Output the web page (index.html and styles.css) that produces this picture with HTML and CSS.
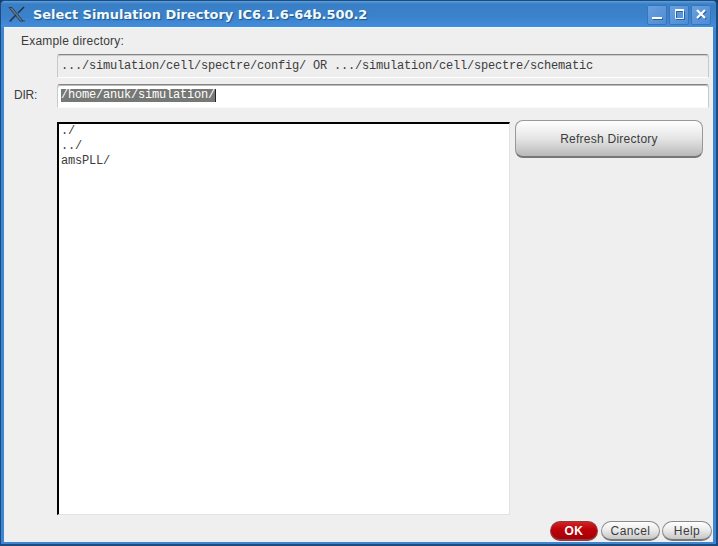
FILE: index.html
```html
<!DOCTYPE html>
<html lang="en">
<head>
<meta charset="utf-8">
<title>Select Simulation Directory</title>
<link rel="stylesheet" href="styles.css">
</head>
<body>
<div class="window">
  <header class="titlebar">
    <svg class="app-icon" width="18" height="18" viewBox="0 0 18 18" fill="none">
      <path d="M1 2.500h3L15 16h-3z" fill="#667887" stroke="#26394c" stroke-width=".9"/>
      <path d="M16 2L10 8M8 10L2 16" stroke="#26313d" stroke-width="1.500"/>
      <path d="M1 16h3M14 16h3" stroke="#34485a"/>
    </svg>
    <h1 class="title">Select Simulation Directory IC6.1.6-64b.500.2</h1>
    <div class="controls">
      <button class="control" aria-label="Minimize"><svg width="20" height="20" viewBox="0 0 20 20"><path d="M6 14h10" stroke="#2860a5" stroke-width="2"/><path d="M5 13h10" stroke="#fff" stroke-width="2"/></svg></button>
      <button class="control" aria-label="Maximize"><svg width="20" height="20" viewBox="0 0 20 20" fill="none"><path d="M7.500 6.500h8v8h-8z" stroke="#2860a5"/><path d="M6.500 5.500h8v8h-8z" stroke="#e8f6ff"/><path d="M6 5h9" stroke="#fff" stroke-width="2"/></svg></button>
      <button class="control" aria-label="Close"><svg width="20" height="20" viewBox="0 0 20 20"><path d="M7 6l8 8m0-8l-8 8" stroke="#2860a5" stroke-width="2"/><path d="M6 5l8 8m0-8l-8 8" stroke="#fff" stroke-width="2.200"/></svg></button>
    </div>
  </header>
  <main class="content">
    <p class="example-label">Example directory:</p>
    <div class="field example">.../simulation/cell/spectre/config/ OR .../simulation/cell/spectre/schematic</div>
    <div class="dir-row">
      <span class="dir-label">DIR:</span>
      <div class="field dir"><span class="selection">/home/anuk/simulation/</span></div>
    </div>
    <div class="browser">
      <ul class="list"><li>./</li><li>../</li><li>amsPLL/</li></ul>
      <button class="refresh">Refresh Directory</button>
    </div>
    <footer class="actions">
      <button class="pill ok">OK</button>
      <button class="pill cancel">Cancel</button>
      <button class="pill help">Help</button>
    </footer>
  </main>
</div>
</body>
</html>
```
FILE: styles.css
```css
* { box-sizing: border-box; margin: 0; padding: 0; }
body { width: 718px; height: 546px; overflow: hidden; background: #173d68; font: 12px/16px "Liberation Sans", sans-serif; color: #3c3c3c; }
button { font: inherit; color: inherit; border: 0; }
.window { height: 546px; display: flex; flex-direction: column; background: #3e86d2; border: 1px solid #1c4b80; border-bottom-width: 2px; border-right-width: 2px; border-radius: 5px 5px 0 0; padding: 0 3px 2px; }
.titlebar { height: 26px; flex: none; display: flex; align-items: center; margin: 0 -3px; padding: 2px 5px 0 7px; background: linear-gradient(#5f9fdc 0, #397fc6 3px, #3b82cb 16px, #438ddd); border-radius: 4px 4px 0 0; }
.app-icon { flex: none; margin-top: -2px; }
.title { flex: 1; margin: 0 0 0 7px; font: bold 13px/20px "DejaVu Sans", sans-serif; letter-spacing: -.04px; color: #effaff; text-shadow: 1px 1px 1px #245489; white-space: nowrap; }
.controls { display: flex; gap: 2px; margin-top: -1px; }
.control { width: 20px; height: 20px; background: linear-gradient(135deg, #6ba1df, #4c8bd3); border-radius: 2px; box-shadow: inset 0 0 0 1px #3675ba; }
.control svg { display: block; }
.content { flex: 1; background: #efefef; border-top: 1px solid #e9fbff; padding: 5px 4px 0 10px; }
.example-label { height: 21px; padding-left: 7px; letter-spacing: .2px; }
.field { height: 24px; border: 1px solid #c9c9c9; border-top: 1px solid #858585; border-bottom-color: #fff; border-radius: 3px 3px 0 0; padding: 3px 3px; font: 12px/16px "Liberation Mono", monospace; letter-spacing: -.2px; white-space: pre; }
.example { margin-left: 43px; background: #eee; box-shadow: inset 0 1px #ccc; }
.dir-row { display: flex; margin-top: 6px; }
.dir-label { width: 43px; padding-top: 3px; letter-spacing: -.2px; }
.dir { flex: 1; padding-top: 4px; background: #fff; box-shadow: inset 0 1px #bbb; border-bottom-color: #fafafa; }
.selection { display: block; width: 155px; height: 13px; line-height: 13px; background: #757875; color: #fff; border-right: 1px solid #222; }
.browser { display: flex; align-items: flex-start; margin: 14px 0 0 43px; }
.list { width: 453px; height: 393px; list-style: none; background: #fff; border: 2px solid #000; border-right: 1px solid #e2e2e2; border-bottom: 1px solid #e2e2e2; padding: 0 2px; font: 12px/15px "Liberation Mono", monospace; letter-spacing: -.2px; }
.refresh { width: 188px; height: 38px; margin: -2px 0 0 5px; letter-spacing: .25px; border: 1px solid #999; border-bottom: 2px solid #777; border-radius: 8px; background: linear-gradient(#fff, #e5e5e5 50%, #b9b9b9); }
.actions { display: flex; justify-content: flex-end; gap: 2px; margin: 6px -3px 0 0; }
.pill { height: 20px; border: 1px solid #8a8a8a; border-bottom: 2px solid #777; border-radius: 10px; background: linear-gradient(#fff, #e9e9e9 50%, #c6c6c6); letter-spacing: .4px; }
.ok { width: 48px; margin-right: 1px; background: linear-gradient(#cf2424, #bd0008 45%, #a50008); color: #fff; border-color: #913c40; font-weight: bold; }
.cancel { width: 59px; }
.help { width: 50px; }
```
